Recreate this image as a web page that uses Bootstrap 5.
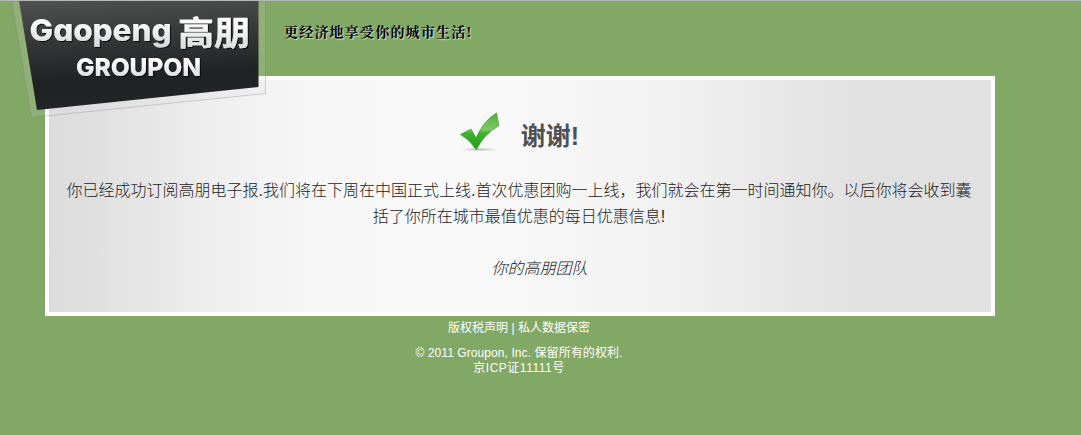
<!DOCTYPE html>
<html lang="zh-CN">
<head>
  <meta charset="UTF-8">
  <meta name="viewport" content="width=device-width, initial-scale=1.0">
  <title>高朋 Groupon</title>
  <link href="https://cdn.jsdelivr.net/npm/bootstrap@5.3.0/dist/css/bootstrap.min.css" rel="stylesheet">
  <style>
    body {
      background: #82a865;
      border-top: 1px solid #b4b9b7;
      font-family: "Liberation Sans", "Noto Sans CJK SC", sans-serif;
      color: #505050;
    }
    .site-header {
      height: 75px;
      padding: 21px 0 0 284px;
    }
    .logo {
      width: 270px;
      height: 120px;
    }
    .logo .latin {
      font-family: Inter, sans-serif;
      font-feature-settings: "cv11";
    }
    .tagline {
      font-family: "Liberation Serif", "Noto Serif CJK SC", "Noto Sans CJK SC", serif;
      font-size: 14px;
      line-height: 22px;
      letter-spacing: 1.2px;
      color: #000;
      text-shadow: 1px 1px 1px #d5dfcc;
    }
    .thanks {
      width: 950px;
      height: 240px;
      margin-left: 45px;
      padding: 30px 19px 0 17px;
      border: 4px solid #fff;
      background: linear-gradient(90deg, #dcdcdc 0%, #dfdfdf 4%, #eeeeee 17%, #f6f6f6 27%, #f9f9f9 43%, #f7f7f7 53%, #f0f0f0 68%, #e5e5e5 81%, #e1e1e1 87%, #e1e1e1 100%);
    }
    .thanks h1 {
      font-size: 25px;
      line-height: 44px;
      padding-top: 4px;
    }
    .message,
    .team {
      font-size: 16px;
      font-weight: 300;
      line-height: 26px;
      color: #222;
    }
    .message {
      margin-top: 20px;
    }
    .team {
      padding-left: 41px;
      margin-top: 26px;
    }
    .site-footer {
      width: 950px;
      margin-left: 44px;
      font-size: 12px;
      line-height: 15px;
      padding-top: 5px;
    }
    .copyright {
      margin-top: 10px;
      letter-spacing: .08px;
    }
    .licence {
      letter-spacing: .5px;
    }
  </style>
</head>
<body>
  <header class="site-header position-relative">
    <svg class="logo position-absolute top-0 start-0" viewBox="0 1 270 120">
      <defs>
        <linearGradient id="plate" x1="0" y1="0" x2=".12" y2="1">
          <stop offset="0" stop-color="#505252"/>
          <stop offset=".4" stop-color="#353737"/>
          <stop offset=".75" stop-color="#1f2223"/>
          <stop offset="1" stop-color="#222526"/>
        </linearGradient>
        <linearGradient id="silver" x1="0" y1="0" x2="0" y2="1">
          <stop offset=".3" stop-color="#fff"/>
          <stop offset="1" stop-color="#d4d5d7"/>
        </linearGradient>
        <filter id="drop" x="-10%" y="-10%" width="120%" height="130%">
          <feDropShadow dx="1" dy="1" stdDeviation=".7" flood-color="#000" flood-opacity=".8"/>
        </filter>
      </defs>
      <path d="M11.500 1L31.500 117.500L265.500 93.500V1Z" fill="#d8dad8" fill-opacity=".16" stroke="#777" stroke-opacity=".3"/>
      <path d="M19 1L37 110L258.500 87V1Z" fill="url(#plate)"/>
      <g filter="url(#drop)">
        <text class="latin" x="29.500" y="40.500" font-size="30" font-weight="800" textLength="142" lengthAdjust="spacingAndGlyphs" fill="url(#silver)">Gaopeng</text>
        <text x="178" y="44.500" font-family="'Noto Sans CJK SC', sans-serif" font-size="33" font-weight="700" textLength="72" lengthAdjust="spacingAndGlyphs" fill="url(#silver)" stroke="#eee" stroke-width=".4">高朋</text>
        <text class="latin" x="76" y="75.500" font-size="25" font-weight="800" textLength="125" lengthAdjust="spacingAndGlyphs" fill="url(#silver)">GROUPON</text>
      </g>
    </svg>
    <div class="tagline fw-bold">更经济地享受你的城市生活!</div>
  </header>

  <main class="thanks">
    <div class="d-flex justify-content-center align-items-start">
      <svg width="42" height="42" viewBox="0 0 42 42">
        <defs>
          <linearGradient id="leaf" x1="0" y1="0" x2="0" y2="1">
            <stop offset="0" stop-color="#4fae3d"/>
            <stop offset=".45" stop-color="#80c965"/>
            <stop offset=".55" stop-color="#41b22c"/>
            <stop offset="1" stop-color="#239b1e"/>
          </linearGradient>
          <radialGradient id="ground">
            <stop offset="0" stop-color="#777" stop-opacity=".5"/>
            <stop offset="1" stop-color="#999" stop-opacity="0"/>
          </radialGradient>
        </defs>
        <ellipse cx="20" cy="39.500" rx="20" ry="2" fill="url(#ground)"/>
        <path d="M1.500 24.500L12 19L17 28Q25 10 37.500 3Q38.500 9 40 15.500Q25 24 17.500 39.500H17Q10 29 1.500 24.500Z" fill="url(#leaf)" stroke="#379e2b" stroke-width=".7" stroke-linejoin="round"/>
      </svg>
      <h1 class="fw-bold mb-0 ms-3 ps-1">谢谢!</h1>
    </div>
    <p class="message text-center mb-0">你已经成功订阅高朋电子报.我们将在下周在中国正式上线.首次优惠团购一上线，我们就会在第一时间通知你。以后你将会收到囊括了你所在城市最值优惠的每日优惠信息!</p>
    <p class="team text-center fst-italic mb-0">你的高朋团队</p>
  </main>

  <footer class="site-footer text-center text-white">
    <div>版权税声明 | 私人数据保密</div>
    <div class="copyright">© 2011 Groupon, Inc. 保留所有的权利.<br><span class="licence">京ICP证11111号</span></div>
  </footer>

  <script src="https://cdn.jsdelivr.net/npm/bootstrap@5.3.0/dist/js/bootstrap.bundle.min.js"></script>
</body>
</html>
